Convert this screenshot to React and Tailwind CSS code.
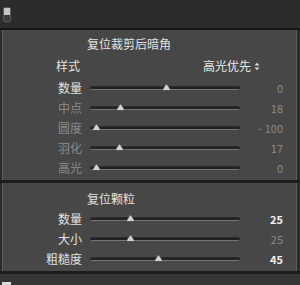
import React from "react";

const font = { fontFamily: '"Noto Sans CJK SC", "Noto Sans", sans-serif' };

const Thumb = () => (
  <svg width="11" height="8" viewBox="0 0 11 8" className="absolute top-[-4px]" style={{ marginLeft: -5 }}>
    <path d="M1 7.5 L4.3 2 Q5.5 0.3 6.7 2 L10 7.5 Z" fill="#d2d2d2" stroke="#2a2a2a" strokeWidth="0.6" />
  </svg>
);

const Slider = ({ pos }) => (
  <div className="relative w-[150px] h-[4px] rounded-full bg-[#222] border border-[#2a2a2a] border-b-[#757575]">
    <div className="absolute top-0 left-0 h-full" style={{ left: pos }}>
      <Thumb />
    </div>
  </div>
);

const Row = ({ label, pos, value, dimLabel, dimValue }) => (
  <div className="flex items-center h-[20px]">
    <div className={`w-[79px] text-right text-[12px] ${dimLabel ? "text-[#8a8a8a]" : "text-[#e2e2e2]"}`}>{label}</div>
    <div className="ml-[8px]">
      <Slider pos={pos} />
    </div>
    <div className={`ml-auto mr-[13px] text-[11px] ${dimValue ? "text-[#8a8a8a]" : "text-[#f2f2f2] font-bold"}`}>{value}</div>
  </div>
);

export default function App() {
  return (
    <div className="w-[300px] h-[285px] bg-[#2c2c2c] flex flex-col overflow-hidden" style={font}>
      <div className="h-[28px] flex items-start pt-[7px] pl-[3px]">
        <div className="w-[8px] h-[15px] rounded-[2px] border border-[#5a5a5a] bg-[#3a3a3a] flex flex-col">
          <div className="h-[7px] bg-[#c4c4c4]" />
        </div>
      </div>
      <div className="h-[2px] bg-[#161616]" />
      <div className="mx-[2px] mr-[3px] h-[150px] bg-[#474747] border-x border-[#5e5e5e] pt-[4px]">
        <div className="h-[20px] flex items-center pl-[84px] text-[12px] text-[#e2e2e2]">复位裁剪后暗角</div>
        <div className="h-[24px] flex items-center">
          <div className="w-[77px] text-right text-[12px] text-[#e2e2e2]">样式</div>
          <div className="ml-auto mr-[36px] flex items-center gap-[3px] text-[12px] text-[#eaeaea]">
            高光优先
            <svg width="6" height="9" viewBox="0 0 6 9">
              <path d="M0.5 3.5 L3 0.8 L5.5 3.5 Z M0.5 5.5 L3 8.2 L5.5 5.5 Z" fill="#d8d8d8" />
            </svg>
          </div>
        </div>
        <Row label="数量" pos={75} value="0" dimValue />
        <Row label="中点" pos={29} value="18" dimLabel dimValue />
        <Row label="圆度" pos={5} value="- 100" dimLabel dimValue />
        <Row label="羽化" pos={28} value="17" dimLabel dimValue />
        <Row label="高光" pos={5} value="0" dimLabel dimValue />
      </div>
      <div className="h-[3px] bg-[#1c1c1c]" />
      <div className="mx-[2px] mr-[3px] h-[88px] bg-[#474747] border-x border-[#5e5e5e] pt-[6px]">
        <div className="h-[20px] flex items-center pl-[84px] text-[12px] text-[#e2e2e2]">复位颗粒</div>
        <Row label="数量" pos={39} value="25" />
        <Row label="大小" pos={39} value="25" dimValue />
        <Row label="粗糙度" pos={67} value="45" />
      </div>
      <div className="h-[3px] bg-[#1c1c1c]" />
      <div className="flex-1 bg-[#363636] flex items-end">
        <div className="w-[9px] h-[3px] ml-[2px] bg-[#ddd]" />
      </div>
    </div>
  );
}
